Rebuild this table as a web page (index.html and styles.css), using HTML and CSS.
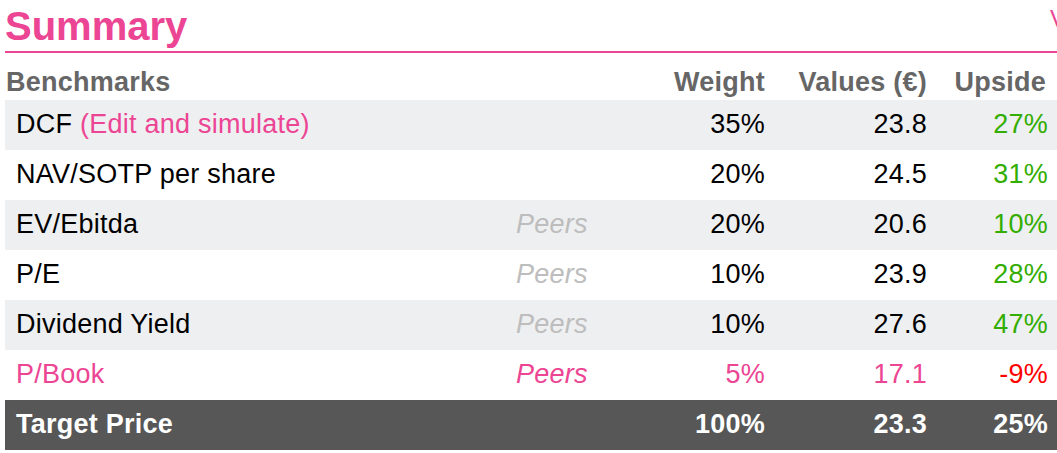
FILE: index.html
```html
<!DOCTYPE html>
<html lang="en">
<head>
<meta charset="utf-8">
<title>Summary</title>
<link rel="stylesheet" href="styles.css">
</head>
<body>
<div class="page">
  <div class="title-row">
    <h1 class="title">Summary</h1>
    <span class="side-link">Valuation</span>
  </div>
  <div class="table">
    <div class="row head">
      <div class="c-name">Benchmarks</div>
      <div class="c-peers"></div>
      <div class="c-num">Weight</div>
      <div class="c-num">Values (€)</div>
      <div class="c-num">Upside</div>
    </div>
    <div class="row alt">
      <div class="c-name">DCF <span class="pink">(Edit and simulate)</span></div>
      <div class="c-peers"></div>
      <div class="c-num">35%</div>
      <div class="c-num">23.8</div>
      <div class="c-num up">27%</div>
    </div>
    <div class="row">
      <div class="c-name">NAV/SOTP per share</div>
      <div class="c-peers"></div>
      <div class="c-num">20%</div>
      <div class="c-num">24.5</div>
      <div class="c-num up">31%</div>
    </div>
    <div class="row alt">
      <div class="c-name">EV/Ebitda</div>
      <div class="c-peers">Peers</div>
      <div class="c-num">20%</div>
      <div class="c-num">20.6</div>
      <div class="c-num up">10%</div>
    </div>
    <div class="row">
      <div class="c-name">P/E</div>
      <div class="c-peers">Peers</div>
      <div class="c-num">10%</div>
      <div class="c-num">23.9</div>
      <div class="c-num up">28%</div>
    </div>
    <div class="row alt">
      <div class="c-name">Dividend Yield</div>
      <div class="c-peers">Peers</div>
      <div class="c-num">10%</div>
      <div class="c-num">27.6</div>
      <div class="c-num up">47%</div>
    </div>
    <div class="row muted">
      <div class="c-name">P/Book</div>
      <div class="c-peers">Peers</div>
      <div class="c-num">5%</div>
      <div class="c-num">17.1</div>
      <div class="c-num down">-9%</div>
    </div>
    <div class="row total">
      <div class="c-name">Target Price</div>
      <div class="c-peers"></div>
      <div class="c-num">100%</div>
      <div class="c-num">23.3</div>
      <div class="c-num">25%</div>
    </div>
  </div>
</div>
</body>
</html>
```

FILE: styles.css
```css
html {
  overflow: hidden;
}
body {
  margin: 0;
  background: #ffffff;
  font-family: "Liberation Sans", Arial, sans-serif;
  color: #000000;
}
.page {
  padding-left: 5px;
  width: 1052px;
}
.title-row {
  display: flex;
  align-items: flex-start;
  padding-top: 2px;
  padding-bottom: 1px;
  border-bottom: 2px solid #ec4593;
}
.title {
  flex: 1;
  margin: 0;
  font-size: 40px;
  line-height: 48px;
  font-weight: bold;
  color: #ec4593;
}
.side-link {
  flex: none;
  width: 0;
  margin-right: 7px;
  margin-top: 5px;
  white-space: nowrap;
  font-size: 24px;
  line-height: 24px;
  color: #ec4593;
}
.table {
  display: flex;
  flex-direction: column;
}
.row {
  display: grid;
  grid-template-columns: 500px 100px 149px 162px 121px;
  padding: 9px 9px 11px 11px;
  font-size: 27px;
  letter-spacing: 0.25px;
  line-height: 30px;
  white-space: nowrap;
}
.row.alt {
  background: #eeeff1;
}
.row.head {
  padding: 14px 11px 3px 1px;
  grid-template-columns: 510px 100px 149px 162px 119px;
  font-weight: bold;
  color: #666666;
}
.c-num {
  text-align: right;
}
.c-peers {
  font-style: italic;
  color: #bdbdbd;
}
.pink {
  color: #ec4593;
}
.up {
  color: #33ad00;
}
.down {
  color: #ff0000;
}
.row.muted {
  color: #ec4593;
}
.row.muted .c-peers {
  color: #ec4593;
}
.row.total {
  background: #575757;
  color: #ffffff;
  font-weight: bold;
}
```
